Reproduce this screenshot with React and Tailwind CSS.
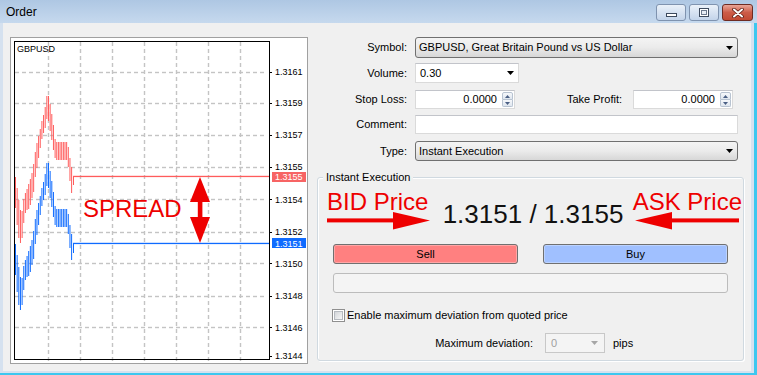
import React from "react";

const KEYS = [
  [15, 177, 208], [17, 190, 228], [19, 205, 243], [21, 215, 243], [23, 200, 225],
  [25, 193, 212], [27, 188, 210], [29, 182, 208], [31, 175, 200], [33, 165, 193],
  [35, 150, 175], [37, 140, 165], [39, 133, 152], [41, 122, 140], [43, 115, 133],
  [45, 105, 127], [47, 92, 115], [49, 100, 127], [51, 112, 138], [53, 125, 150],
  [55, 142, 160], [57, 142, 160], [59, 142, 160], [61, 142, 160], [63, 142, 160],
  [65, 142, 160], [67, 142, 160], [69, 155, 177], [71, 167, 193],
];

function interp(x) {
  for (let i = 0; i < KEYS.length - 1; i++) {
    const [x0, t0, b0] = KEYS[i];
    const [x1, t1, b1] = KEYS[i + 1];
    if (x >= x0 && x <= x1) {
      const f = (x - x0) / (x1 - x0);
      return [t0 + (t1 - t0) * f, b0 + (b1 - b0) * f];
    }
  }
  const last = KEYS[KEYS.length - 1];
  return [last[1], last[2]];
}

const BARS = [];
for (let x = 15; x <= 72; x += 1.65) {
  const [t, b] = interp(x);
  BARS.push([x, Math.round(t), Math.round(b)]);
}

const GRID_X = [48, 80, 112, 144, 176, 208, 240];
const GRID_Y = [72, 103, 135, 167, 199, 232, 263, 296, 327];
const LABELS = [
  ["1.3161", 71.7], ["1.3159", 103], ["1.3157", 135], ["1.3155", 166.7], ["1.3154", 199.3],
  ["1.3152", 231.7], ["1.3150", 263.3], ["1.3148", 295.7], ["1.3146", 327.3], ["1.3144", 356],
];
const FF = "Liberation Sans, Arial, sans-serif";
const RC = "#ff5c5c";
const BC = "#0f6bff";

function Chart() {
  const dashesV = [];
  for (let y = 42; y < 358; y += 7) dashesV.push(y);
  const dashesH = [];
  for (let x = 15; x < 267; x += 7) dashesH.push(x);
  return (
    <div className="relative w-[298px] h-[327px] shrink-0 border border-[#a0a0a0] bg-white">
      <svg width="296" height="325" viewBox="11 38 296 325" className="block">
        <rect x="11" y="38" width="296" height="325" fill="#ffffff" />
        {GRID_X.map((x) =>
          dashesV.map((y) => <rect key={"gx" + x + "-" + y} x={x - 0.2} y={y} width="1.4" height="4" fill="#c4c4c4" />)
        )}
        {GRID_Y.map((y) =>
          dashesH.map((x) => <rect key={"gy" + y + "-" + x} x={x} y={y - 0.2} width="4" height="1.4" fill="#c4c4c4" />)
        )}
        {BARS.map(([x, t, b], i) => (
          <rect key={"r" + i} x={x} y={t} width="1" height={b - t} fill={RC} />
        ))}
        {BARS.map(([x, t, b], i) => (
          <rect key={"b" + i} x={x} y={t + 67} width="1" height={b - t} fill={BC} />
        ))}
        <rect x="73" y="176" width="1" height="9" fill={RC} />
        <rect x="73" y="175.8" width="196" height="1.3" fill={RC} />
        <rect x="73" y="243" width="1" height="10" fill={BC} />
        <rect x="73" y="242.8" width="196" height="1.3" fill={BC} />
        <rect x="14" y="41" width="256" height="1" fill="#000" />
        <rect x="14" y="359" width="256" height="1" fill="#000" />
        <rect x="14" y="41" width="1" height="319" fill="#000" />
        <rect x="269" y="41" width="1" height="319" fill="#000" />
        {LABELS.map(([t, y]) => (
          <g key={t}>
            <rect x="269" y={Math.round(y)} width="3" height="1" fill="#000" />
            <text x="275" y={y + 3.3} fontSize="9" fontFamily={FF} fill="#000">{t}</text>
          </g>
        ))}
        <rect x="272" y="172" width="34" height="10" fill="#f76464" />
        <text x="275" y="180.3" fontSize="9" fontFamily={FF} fill="#ffffff">1.3155</text>
        <rect x="272" y="238" width="34" height="10" fill={BC} />
        <text x="275" y="246.8" fontSize="9" fontFamily={FF} fill="#ffffff">1.3151</text>
        <text x="17" y="52" fontSize="9" fontFamily={FF} fill="#000">GBPUSD</text>
      </svg>
      <div className="absolute left-[72px] top-[159px] text-[24px] leading-[24px] text-[#ee0000] whitespace-nowrap">
        SPREAD
      </div>
      <svg className="absolute left-[177px] top-[138px]" width="24" height="68" viewBox="0 0 24 68">
        <polygon points="12,1 2,26 22,26" fill="#ee0000" />
        <rect x="9.8" y="25" width="4.6" height="17" fill="#ee0000" />
        <polygon points="2,41 22,41 12,67" fill="#ee0000" />
      </svg>
    </div>
  );
}

function Tri({ color = "#000" }) {
  return (
    <svg width="7" height="4" viewBox="0 0 7 4" className="block">
      <path d="M0 0H7L3.5 4Z" fill={color} />
    </svg>
  );
}

function Combo({ text, w }) {
  return (
    <div
      className={
        "flex items-center h-full rounded-[3px] border border-[#707070] bg-gradient-to-b from-[#f4f4f4] via-[#ebebeb] to-[#d7d7d7] pl-[3px] pr-[4px] " +
        w
      }
    >
      <span className="whitespace-nowrap">{text}</span>
      <span className="ml-auto">
        <Tri />
      </span>
    </div>
  );
}

function Spin() {
  return (
    <div className="flex flex-col w-[12px] h-full py-[1px] pr-[1px]">
      <div className="flex-1 flex items-center justify-center border border-[#b8c3d1] rounded-t-[2px] bg-gradient-to-b from-[#f6f8fb] to-[#dfe6ef]">
        <svg width="5" height="3" viewBox="0 0 5 3" className="block">
          <path d="M0 3H5L2.5 0Z" fill="#4a5f84" />
        </svg>
      </div>
      <div className="flex-1 flex items-center justify-center border border-t-0 border-[#b8c3d1] rounded-b-[2px] bg-gradient-to-b from-[#f6f8fb] to-[#dfe6ef]">
        <svg width="5" height="3" viewBox="0 0 5 3" className="block">
          <path d="M0 0H5L2.5 3Z" fill="#4a5f84" />
        </svg>
      </div>
    </div>
  );
}

function NumBox() {
  return (
    <div className="flex items-center w-[100px] h-full border border-[#dadada] border-t-[#c2c4ca] bg-white">
      <span className="flex-1 text-right pr-[5px]">0.0000</span>
      <Spin />
    </div>
  );
}

function Label({ children }) {
  return <div className="w-[90px] shrink-0 text-right whitespace-nowrap">{children}</div>;
}

function Form() {
  return (
    <div className="ml-[9px] w-[427px] flex flex-col">
      <div className="flex items-center h-[21px]">
        <Label>Symbol:</Label>
        <div className="ml-[8px] h-full">
          <Combo text="GBPUSD, Great Britain Pound vs US Dollar" w="w-[323px]" />
        </div>
      </div>
      <div className="flex items-center h-[20px] mt-[5px]">
        <Label>Volume:</Label>
        <div className="ml-[8px] h-full flex items-center w-[104px] border border-[#dadada] border-t-[#c2c4ca] bg-white pl-[4px] pr-[4px]">
          <span>0.30</span>
          <span className="ml-auto">
            <Tri />
          </span>
        </div>
      </div>
      <div className="flex items-center h-[19px] mt-[7px]">
        <Label>Stop Loss:</Label>
        <div className="ml-[8px] h-full">
          <NumBox />
        </div>
        <div className="w-[107px] text-right whitespace-nowrap">Take Profit:</div>
        <div className="ml-[11px] h-full">
          <NumBox />
        </div>
      </div>
      <div className="flex items-center h-[19px] mt-[6px]">
        <Label>Comment:</Label>
        <div className="ml-[8px] h-full w-[323px] border border-[#dadada] border-t-[#c2c4ca] bg-white" />
      </div>
      <div className="flex items-center h-[20px] mt-[7px]">
        <Label>Type:</Label>
        <div className="ml-[8px] h-full">
          <Combo text="Instant Execution" w="w-[323px]" />
        </div>
      </div>

      <div className="relative mt-[16px] border border-[#d0d9e0] rounded-[3px] shadow-[inset_1px_1px_0_#ffffff,1px_1px_0_#ffffff] pt-[12px] pb-[7px]">
        <span className="absolute left-[5px] -top-[7px] px-[3px] bg-[#f0f0f0] leading-[13px] whitespace-nowrap">
          Instant Execution
        </span>
        <div className="flex items-start pl-[9px] pr-[1px]">
          <div className="flex flex-col w-[104px] shrink-0">
            <span className="text-[24px] leading-[24px] text-[#ee0000] whitespace-nowrap">BID Price</span>
            <svg width="104" height="18" viewBox="0 0 104 18" className="block -mt-[2px]">
              <rect x="0" y="6.4" width="70" height="4" fill="#ee0000" />
              <polygon points="66,0 103,8.5 66,17.4" fill="#ee0000" />
            </svg>
          </div>
          <div className="flex-1 text-center text-[26px] leading-[26px] mt-[11px] text-[#111111] whitespace-nowrap">
            1.3151 / 1.3155
          </div>
          <div className="flex flex-col items-end w-[107px] shrink-0">
            <span className="text-[24px] leading-[24px] text-[#ee0000] whitespace-nowrap">ASK Price</span>
            <svg width="107" height="18" viewBox="0 0 107 18" className="block -mt-[2px]">
              <polygon points="0,8.5 37,0 37,17.4" fill="#ee0000" />
              <rect x="34" y="6.4" width="70" height="4" fill="#ee0000" />
            </svg>
          </div>
        </div>
        <div className="flex gap-[25px] px-[15px] mt-[14px]">
          <div className="w-[185px] h-[20px] flex items-center justify-center rounded-[3px] border border-[#707070] bg-[#ff8080] shadow-[inset_0_0_0_1px_rgba(255,255,255,0.3)]">
            Sell
          </div>
          <div className="w-[185px] h-[20px] flex items-center justify-center rounded-[3px] border border-[#707070] bg-[#a0c0ff] shadow-[inset_0_0_0_1px_rgba(255,255,255,0.3)]">
            Buy
          </div>
        </div>
        <div className="mx-[15px] mt-[9px] h-[20px] rounded-[3px] border border-[#bcbcbc] bg-[#f4f4f4]" />
        <div className="flex items-center h-[13px] mt-[16px] pl-[14px]">
          <div className="w-[13px] h-[13px] border border-[#8f8f8f] bg-white p-[1px]">
            <div className="w-full h-full border border-[#b6bac0] bg-gradient-to-br from-[#d3d6da] to-[#f7f7f7]" />
          </div>
          <span className="ml-[2px] whitespace-nowrap">Enable maximum deviation from quoted price</span>
        </div>
        <div className="flex items-center h-[20px] mt-[11px]">
          <div className="w-[215px] text-right whitespace-nowrap">Maximum deviation:</div>
          <div className="ml-[12px] w-[60px] h-full flex items-center border border-[#c8c8c8] bg-[#f4f4f4] pl-[5px] pr-[6px]">
            <span className="text-[#a0a0a0]">0</span>
            <span className="ml-auto">
              <Tri color="#a6a6a6" />
            </span>
          </div>
          <span className="ml-[8px]">pips</span>
        </div>
      </div>
    </div>
  );
}

function TitleBar() {
  return (
    <div className="h-[23px] shrink-0 flex items-start bg-gradient-to-b from-[#aec7e3] to-[#c6d9ee] pl-[6px] pr-[4px]">
      <span className="mt-[5px] text-[12px] leading-[14px] text-black">Order</span>
      <div className="ml-auto mt-[4px] flex gap-[3px]">
        <div className="w-[30px] h-[17px] rounded-[3px] border border-[#7f93af] bg-gradient-to-b from-[#eaf1f9] to-[#c3d4ea] flex items-end justify-center pb-[3px]">
          <div className="w-[11px] h-[4px] border border-[#3d4a5d] bg-white" />
        </div>
        <div className="w-[30px] h-[17px] rounded-[3px] border border-[#7f93af] bg-gradient-to-b from-[#eaf1f9] to-[#c3d4ea] flex items-center justify-center">
          <div className="w-[10px] h-[9px] border border-[#3d4a5d] bg-white p-[1px]">
            <div className="w-full h-full border border-[#6d7a8d] bg-[#e7edf5]" />
          </div>
        </div>
        <div className="w-[31px] h-[17px] rounded-[3px] border border-[#6e2b22] bg-gradient-to-b from-[#e9a597] via-[#cc5c48] to-[#c14a33] flex items-center justify-center">
          <svg width="12" height="10" viewBox="0 0 12 10" className="block">
            <path d="M2 1.5L10 8.5M10 1.5L2 8.5" stroke="#5a1d15" strokeWidth="3.6" strokeLinecap="round" />
            <path d="M2 1.5L10 8.5M10 1.5L2 8.5" stroke="#ffffff" strokeWidth="2" strokeLinecap="round" />
          </svg>
        </div>
      </div>
    </div>
  );
}

export default function App() {
  return (
    <div className="w-[757px] h-[375px] flex flex-col overflow-hidden bg-[#c6d9ee] font-['Liberation_Sans',Arial,sans-serif] text-[11px] leading-[13px] text-black">
      <TitleBar />
      <div className="flex-1 min-h-0 flex flex-col border-r-[3px] border-b-[2px] border-[#3cc7ef]">
        <div className="flex-1 min-h-0 flex items-start border-l-[3px] border-r-[3px] border-b-[2px] border-[#d5e1ef] bg-[#f0f0f0] pt-[14px] pl-[7px]">
          <Chart />
          <Form />
        </div>
      </div>
    </div>
  );
}
